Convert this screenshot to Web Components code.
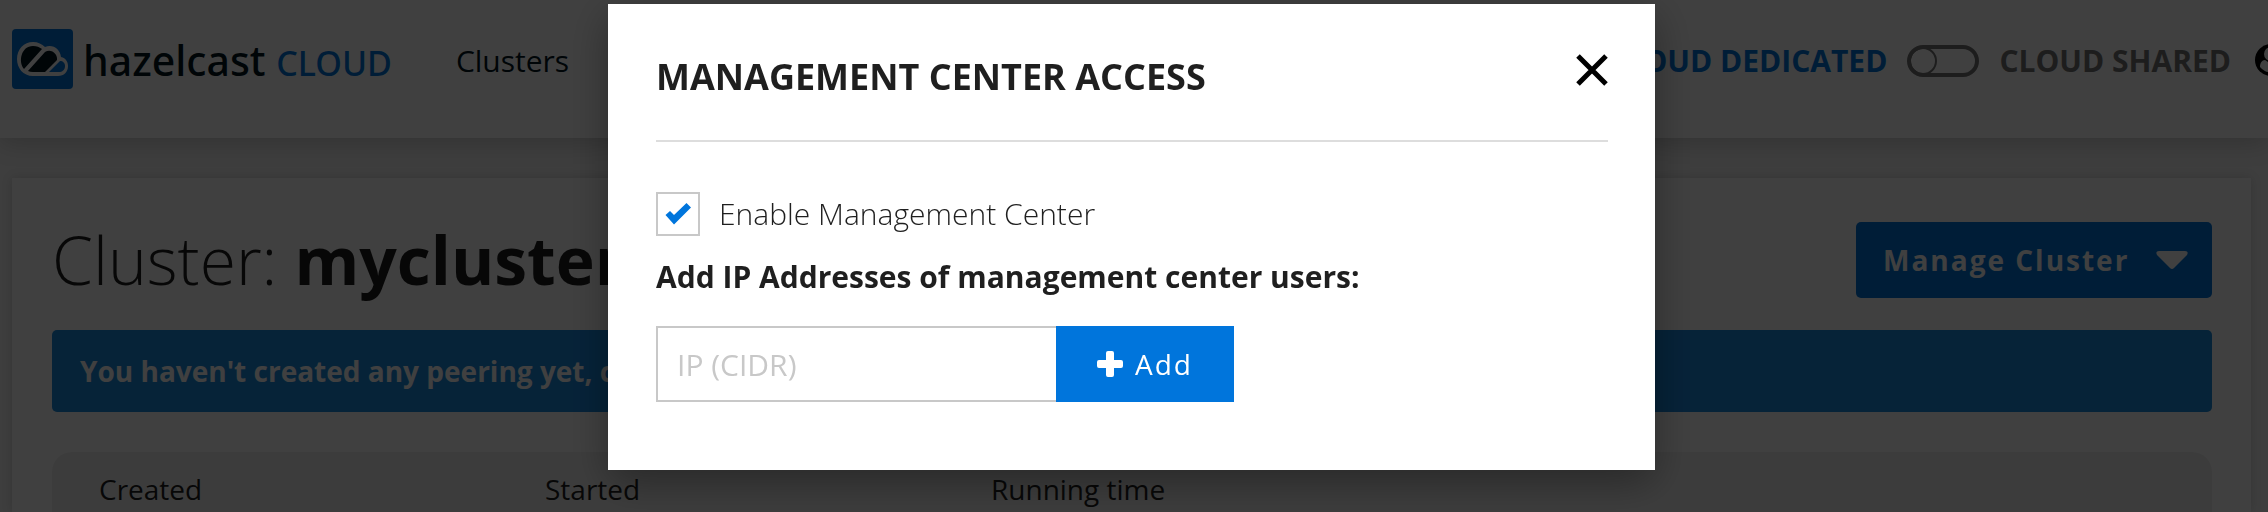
<!DOCTYPE html>
<html lang="en">
<head>
<meta charset="utf-8">
<title>Hazelcast Cloud</title>
<style>
html, body { margin: 0; }
body { background: #f5f5f5; color: #1f1f1f; font: 28px/40px "Open Sans", sans-serif; }
</style>
</head>
<body>
<cloud-app></cloud-app>
<script>
const define = (name, html) => customElements.define(name, class extends HTMLElement {
  constructor() {
    super();
    this.attachShadow({ mode: 'open' }).innerHTML = html;
  }
});

define('cloud-logo', `
<style>
:host { display: block; }
a { display: flex; align-items: flex-start; gap: 10px; color: #00141e; text-decoration: none; white-space: nowrap; }
svg { width: 61px; height: 60px; }
.name { font: 500 41px/62px "Noto Sans", sans-serif; }
.name span { font-size: 34px; color: #0075dc; }
</style>
<a href="#">
<svg viewBox="0 0 61 60" aria-hidden="true">
<rect width="61" height="60" rx="4" fill="#0075dc"/>
<path d="M21 47C11 47 5 39 5 30c0-10 7-17 16-17 5 0 9 2 12 5 8-3 15 2 16 10 5 1 7 5 7 9 0 6-4 10-10 10z" fill="#fff"/>
<path d="M12 40c-6-7-3-23 9-23 4 0 6 1 9 3zM16 42l17-19c6-4 13 2 12 8L33 43H21q-3 0-5-1z" fill="#00141e"/>
<path d="M37 43l11-11c3 0 5 2 5 5 0 4-3 6-6 6z" fill="#0075dc"/>
</svg>
<span class="name">hazelcast <span>CLOUD</span></span>
</a>`);

define('plan-switch', `
<style>
:host { display: block; font-size: 30px; font-weight: 700; white-space: nowrap; }
div { display: flex; align-items: center; gap: 20px; }
.on { color: #0075dc; }
.off { color: #757575; }
button { box-sizing: border-box; width: 72px; height: 32px; padding: 0; border: 4px solid #757575; border-radius: 16px; background: none; display: flex; align-items: center; }
i { box-sizing: border-box; flex: none; width: 28px; height: 28px; margin-left: -2px; border: 2px solid #757575; border-radius: 50%; }
</style>
<div><span class="on">CLOUD DEDICATED</span>
<button type="button" role="switch" aria-checked="false" aria-label="Cloud shared"><i></i></button>
<span class="off">CLOUD SHARED</span></div>`);

define('app-header', `
<style>
:host { display: flex; flex: none; align-items: flex-start; height: 138px; background: #fff; box-shadow: 0 4px 24px rgba(0,0,0,.2); position: relative; box-sizing: border-box; padding: 29px 0 0 12px; }
nav { margin: 12px 0 0 64px; flex: 1; font-size: 30px; }
nav a { color: #00141e; text-decoration: none; }
plan-switch { margin: 12px 24px 0 0; }
.user { flex: none; width: 13px; height: 32px; margin-top: 15px; padding: 0; border: 0; background: none; overflow: hidden; }
.user svg { display: block; width: 32px; height: 32px; }
</style>
<cloud-logo></cloud-logo>
<nav><a href="#clusters">Clusters</a></nav>
<plan-switch></plan-switch>
<button class="user" type="button" aria-label="Account"><svg viewBox="0 0 32 32"><circle cx="16" cy="16" r="16"/><circle cx="16" cy="10" r="7" fill="#fff"/><path d="M5 23c0-4 2-7 5-7q6 5 12 0c3 0 5 3 5 7a14 14 0 0 1-22 0" fill="#fff"/></svg></button>`);

define('cluster-panel', `
<style>
:host { display: flex; flex: 1; flex-direction: column; box-sizing: border-box; margin: 40px 17px 0 12px; padding: 44px 39px 0 40px; background: #fff; box-shadow: 0 0 10px rgba(0,0,0,.15); }
.top { display: flex; justify-content: space-between; }
h1 { margin: 0; font-size: 66px; line-height: 74px; font-weight: 300; white-space: nowrap; }
h1 b { font-weight: 700; }
.top button { box-sizing: border-box; width: 356px; height: 76px; padding: 0 24px 0 27px; border: 0; border-radius: 5px; background: #0075dc; color: #fff; font: 700 28px/40px "Open Sans", sans-serif; letter-spacing: 2px; display: flex; align-items: center; justify-content: space-between; white-space: nowrap; }
.top svg { width: 32px; height: 18px; }
.note { margin: 32px 0 40px; padding: 21px 28px; border-radius: 5px; background: #198ae0; color: #fff; font-weight: 700; white-space: nowrap; }
dl { flex: 1; display: grid; grid-template-columns: repeat(auto-fill, 446px); margin: 0; padding: 17px 0 0 47px; border-radius: 20px 20px 0 0; background: #f0f0f0; }
dt { height: 40px; }
</style>
<div class="top"><h1>Cluster: <b>mycluster</b></h1>
<button type="button">Manage Cluster <svg viewBox="0 0 32 18" aria-hidden="true"><path d="M3 0h26q4 0 2 4L18 17q-2 2-4 0L1 4q-2-4 2-4" fill="#fff"/></svg></button></div>
<div class="note">You haven't created any peering yet, create</div>
<dl><dt>Created</dt><dt>Started</dt><dt>Running time</dt></dl>`);

define('access-dialog', `
<style>
:host { display: block; position: fixed; inset: 0; padding-right: 5px; background: rgba(0,0,0,.75); }
section { box-sizing: border-box; max-width: 1047px; margin: 4px auto 0; padding: 46px 47px 68px 48px; background: #fff; box-shadow: 0 12px 40px rgba(0,0,0,.35); }
header { display: flex; justify-content: space-between; height: 90px; border-bottom: 2px solid #ddd; }
h2 { margin: 0; font-size: 36px; line-height: 54px; font-weight: 700; }
button { padding: 0; border: 0; background: none; }
.close { width: 32px; height: 32px; margin-top: 4px; }
.close svg { display: block; width: 32px; height: 32px; }
.check { display: flex; align-items: center; gap: 19px; height: 44px; margin-top: 50px; font-size: 30px; font-weight: 300; }
.check input { appearance: none; box-sizing: border-box; width: 44px; height: 44px; margin: 0; border: 2px solid #c8c8c8; background: #fff; }
.tick { display: grid; }
.tick > * { grid-area: 1 / 1; }
.tick svg { width: 44px; height: 44px; pointer-events: none; }
.tick input:not(:checked) + svg { display: none; }
.ip { display: block; margin: 21px 0 29px; font-size: 30px; font-weight: 700; }
form { display: flex; }
.field { box-sizing: border-box; width: 400px; height: 76px; padding: 0 19px; border: 2px solid #c8c8c8; border-right: 0; border-radius: 0; font: 30px/40px "Open Sans", sans-serif; color: #1f1f1f; }
.field::placeholder { color: #c8c8c8; opacity: 1; }
.add { display: flex; align-items: center; justify-content: center; gap: 12px; width: 178px; height: 76px; background: #0075dc; color: #fff; font: 28px/40px "Open Sans", sans-serif; letter-spacing: 2px; }
.add svg { width: 26px; height: 26px; }
</style>
<section role="dialog" aria-labelledby="t">
<header><h2 id="t">MANAGEMENT CENTER ACCESS</h2>
<button class="close" type="button" aria-label="Close"><svg viewBox="0 0 32 32"><path d="M2 2l28 28M30 2L2 30" stroke="#000" stroke-width="5"/></svg></button></header>
<div class="check"><span class="tick"><input id="en" type="checkbox" checked><svg viewBox="0 0 44 44" aria-hidden="true"><path d="M9.500 23l4.500-4 4 4 12.500-12 4.500 4.500-17 17z" fill="#0075dc"/></svg></span><label for="en">Enable Management Center</label></div>
<label class="ip" for="ip">Add IP Addresses of management center users:</label>
<form><input class="field" id="ip" type="text" placeholder="IP (CIDR)"><button class="add" type="button"><svg viewBox="0 0 26 26" aria-hidden="true"><path d="M11 0h4q2 0 2 2v7h7q2 0 2 2v4q0 2-2 2h-7v7q0 2-2 2h-4q-2 0-2-2v-7H2q-2 0-2-2v-4q0-2 2-2h7V2q0-2 2-2" fill="#fff"/></svg>Add</button></form>
</section>`);

define('cloud-app', `
<style>:host { display: flex; flex-direction: column; min-height: 100vh; }</style>
<app-header></app-header>
<cluster-panel></cluster-panel>
<access-dialog></access-dialog>`);
</script>
</body>
</html>
